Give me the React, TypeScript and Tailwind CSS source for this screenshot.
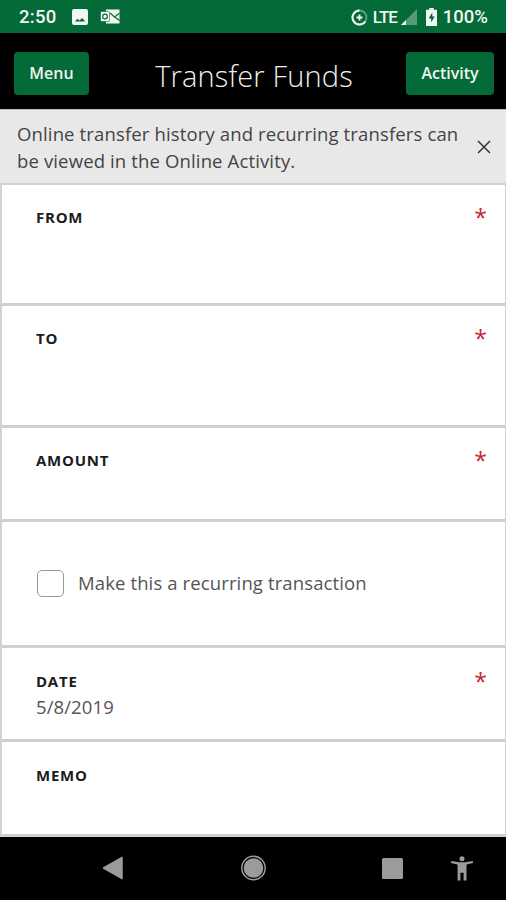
import { useState } from 'react';

type FieldProps = {
  label: string;
  value?: string;
  required?: boolean;
  className: string;
};

function Field({ label, value, required, className }: FieldProps) {
  return (
    <div
      className={`flex shrink-0 items-start justify-between border-b-[3px] border-[#cfcfcf] pr-[18px] pl-[34px] ${className}`}
    >
      <div>
        <div className="text-[15px] leading-6 font-bold tracking-[0.75px] text-[#1c1c1c]">{label}</div>
        {value && <div className="mt-px text-[18.5px] leading-[26px] tracking-[0.1px] text-[#555]">{value}</div>}
      </div>
      {required && <span className="-mt-[3px] text-[23px] leading-[30px] text-[#c8262c]">*</span>}
    </div>
  );
}

function StatusBar() {
  return (
    <div className="flex h-[33px] shrink-0 items-center bg-[#046a38] pt-px pr-[17px] pl-[19px] font-[Roboto,sans-serif] text-[#f2f7f1]">
      <span className="w-[38px] text-[18.5px] leading-none font-medium tracking-[0.3px]">2:50</span>
      {/* Picture notification */}
      <svg className="ml-[15px]" width="16" height="16" viewBox="0 0 16 16">
        <rect width="16" height="16" rx="2" fill="currentColor" />
        <path d="M3 12.5 5.3 9.8l2.1 1.7 2.8-2.6 3 3.6Z" fill="#046a38" />
      </svg>
      {/* Outlook notification */}
      <svg className="ml-3" width="20" height="16" viewBox="0 0 20 16">
        <path d="M6 0.5h13.5v14H6Z" fill="currentColor" />
        <path d="M10 4 14.5 8l5-3.7M14.5 8l5 3.5" fill="none" stroke="#046a38" strokeWidth="1.2" />
        <rect x="0.5" y="2.5" width="9" height="10" rx="1" fill="currentColor" stroke="#046a38" strokeWidth="0.6" />
        <circle cx="5" cy="7.5" r="2.4" fill="none" stroke="#046a38" strokeWidth="1.2" />
      </svg>
      <div className="flex-1" />
      {/* Data saver */}
      <svg width="17" height="17" viewBox="0 0 17 17" fill="none" stroke="currentColor">
        <circle cx="8.5" cy="8.5" r="7" strokeWidth="1.8" opacity="0.4" />
        <path d="M8.5 1.5a7 7 0 1 0 5.8 11" strokeWidth="2" />
        <path d="M8.5 5.5v6M5.5 8.5h6" strokeWidth="1.9" />
      </svg>
      <span className="ml-[5px] w-[24px] text-[17px] leading-none font-medium tracking-[-1px]">LTE</span>
      <svg className="ml-[4px]" width="16" height="16" viewBox="0 0 16 16" fill="currentColor">
        <path d="M16 0v16H0Z" opacity="0.35" />
        <path d="M5 11v5H0Z" />
      </svg>
      <svg className="ml-[9px]" width="11" height="18" viewBox="0 0 11 18">
        <path d="M3.3 0h4.4v1.8H11V18H0V1.8h3.3Z" fill="currentColor" />
        <path d="M6.3 4.5 2.6 10.5h2.5v4l3.6-6H6.3Z" fill="#046a38" />
      </svg>
      <span className="mr-px ml-[6px] text-[18.5px] leading-none font-medium">100%</span>
    </div>
  );
}

function NavBar() {
  return (
    <div className="flex flex-1 items-start bg-black pt-4 pl-[101px] text-[#9b9b9b]">
      <svg width="24" height="30" viewBox="0 0 24 30">
        <path d="M2.5 15 21 4.5v21Z" fill="currentColor" stroke="currentColor" strokeWidth="1.5" strokeLinejoin="round" />
      </svg>
      <svg className="ml-[115px]" width="26" height="30" viewBox="0 0 26 30">
        <circle cx="13.5" cy="15" r="11.7" fill="none" stroke="currentColor" strokeWidth="1.5" />
        <circle cx="13.5" cy="15" r="9.8" fill="currentColor" />
      </svg>
      <svg className="ml-[114px]" width="24" height="30" viewBox="0 0 24 30">
        <rect x="2" y="5" width="21" height="21" rx="1.5" fill="currentColor" />
      </svg>
      <svg className="ml-[46px]" width="24" height="30" viewBox="0 0 24 30" fill="currentColor">
        <circle cx="12" cy="5.7" r="2.5" />
        <path d="M1.3 7.9 9 9.3h6l7.7-1.4.4 2.2-6.6 1.4V27.5h-2.9v-7.7h-3.2v7.7H7.6v-16L.9 10.1Z" />
      </svg>
    </div>
  );
}

export default function App() {
  const [showNotice, setShowNotice] = useState(true);
  const [recurring, setRecurring] = useState(false);

  return (
    <div className="flex h-[900px] w-[506px] flex-col overflow-hidden bg-white font-['Open_Sans',sans-serif]">
      <StatusBar />

      <header className="flex h-[76px] shrink-0 items-center bg-black pt-[5px] pr-3 pl-[14px]">
        <button className="h-[43px] w-[75px] rounded-[4px] bg-[#046a38] pb-[2px] text-[16px] font-semibold text-[#f0f5ef]">
          Menu
        </button>
        <h1 className="flex-1 pt-1 pl-[13px] text-center text-[29px] leading-10 font-light tracking-[0.15px] text-[#eee]">
          Transfer Funds
        </h1>
        <button className="h-[43px] w-[88px] rounded-[4px] bg-[#046a38] pb-[2px] text-[16px] font-semibold text-[#f0f5ef]">
          Activity
        </button>
      </header>

      {showNotice && (
        <div className="flex h-[74px] shrink-0 items-center justify-between border-t border-[#bbb] bg-[#e8e8e8] pr-[15px] pl-[17px]">
          <p className="text-[18.5px] leading-[27px] tracking-[0.14px] whitespace-nowrap text-[#444]">
            Online transfer history and recurring transfers can
            <br />
            be viewed in the Online Activity.
          </p>
          <button aria-label="Dismiss" onClick={() => setShowNotice(false)}>
            <svg width="14" height="14" viewBox="0 0 14 14" fill="none" stroke="#333" strokeWidth="1.5">
              <path d="m1 1 12 12M13 1 1 13" />
            </svg>
          </button>
        </div>
      )}

      <main className="flex shrink-0 flex-col border-t-2 border-r border-l-2 border-[#d2d2d2]">
        <Field label="FROM" required className="h-[121px] pt-5" />
        <Field label="TO" required className="h-[122px] pt-5" />
        <Field label="AMOUNT" required className="h-[94px] pt-5" />
        <label className="flex h-[126px] shrink-0 items-center border-b-[3px] border-[#cfcfcf] pl-[35px]">
          <input
            type="checkbox"
            checked={recurring}
            onChange={(e) => setRecurring(e.target.checked)}
            className="size-[27px] appearance-none rounded-[5px] border-[1.5px] border-[#999] bg-white checked:bg-[#046a38]"
          />
          <span className="ml-[14px] pb-0.5 text-[18.5px] tracking-[0.12px] text-[#555]">
            Make this a recurring transaction
          </span>
        </label>
        <Field label="DATE" value="5/8/2019" required className="h-[94px] pt-[21px]" />
        <Field label="MEMO" className="h-[95px] pt-[21px]" />
      </main>

      <NavBar />
    </div>
  );
}
